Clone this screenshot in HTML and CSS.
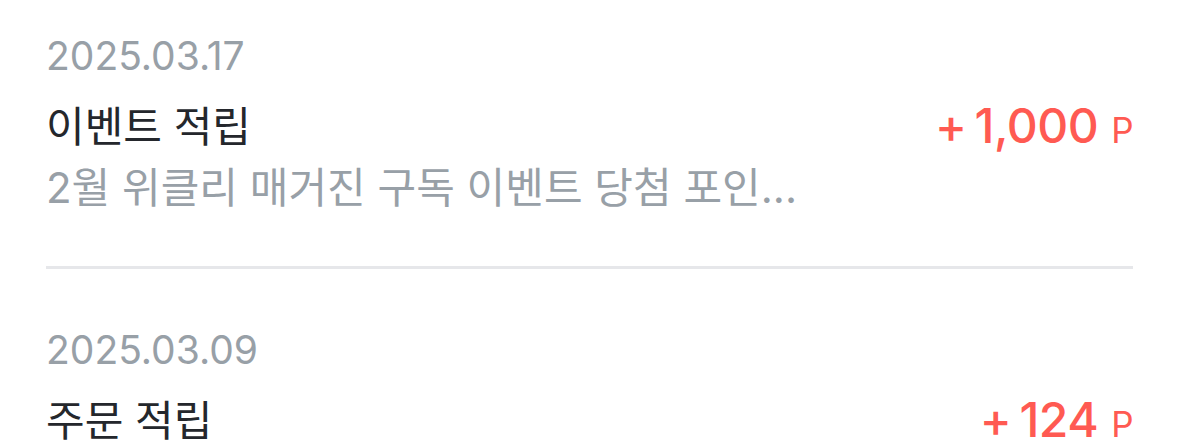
FILE: index.html
```html
<!DOCTYPE html>
<html lang="ko">
<head>
  <meta charset="UTF-8">
  <meta name="viewport" content="width=device-width, initial-scale=1.0">
  <title>포인트 내역</title>
  <link rel="stylesheet" href="styles.css">
</head>
<body>
  <ul class="history">
    <li class="entry">
      <p class="date">2025.03.17</p>
      <div class="row">
        <div class="info">
          <p class="title">이벤트 적립</p>
          <p class="desc">2월 위클리 매거진 구독 이벤트 당첨 포인...</p>
        </div>
        <p class="amount"><span class="sign">+</span>1,000<span class="unit">P</span></p>
      </div>
    </li>
    <li class="entry">
      <p class="date">2025.03.09</p>
      <div class="row">
        <div class="info">
          <p class="title">주문 적립</p>
        </div>
        <p class="amount"><span class="sign">+</span>124<span class="unit">P</span></p>
      </div>
    </li>
  </ul>
</body>
</html>
```

FILE: styles.css
```css
body { margin: 0; background: #fff; font-family: Inter, "Noto Sans CJK KR", sans-serif; overflow: hidden; }
p { margin: 0; }
.history { list-style: none; margin: 0; padding: 0 46px; }
.entry { padding: 28px 0 49px; border-bottom: 3px solid #e6e7ea; }
.entry + .entry { padding-top: 53px; border-bottom: none; }
.date { font-size: 39px; line-height: 56px; color: #98a0a7; }
.row { display: flex; justify-content: space-between; align-items: flex-start; margin-top: 11px; }
.title { font-size: 42px; line-height: 64px; color: #24272c; }
.desc { font-size: 42px; line-height: 58px; color: #98a0a7; }
.amount { font-size: 48px; line-height: 64px; font-weight: 500; color: #ff5a52; margin-top: -1px; letter-spacing: -0.5px; }
.sign { margin-right: 8px; }
.unit { font-size: 35px; font-weight: 400; margin-left: 13px; }
```
